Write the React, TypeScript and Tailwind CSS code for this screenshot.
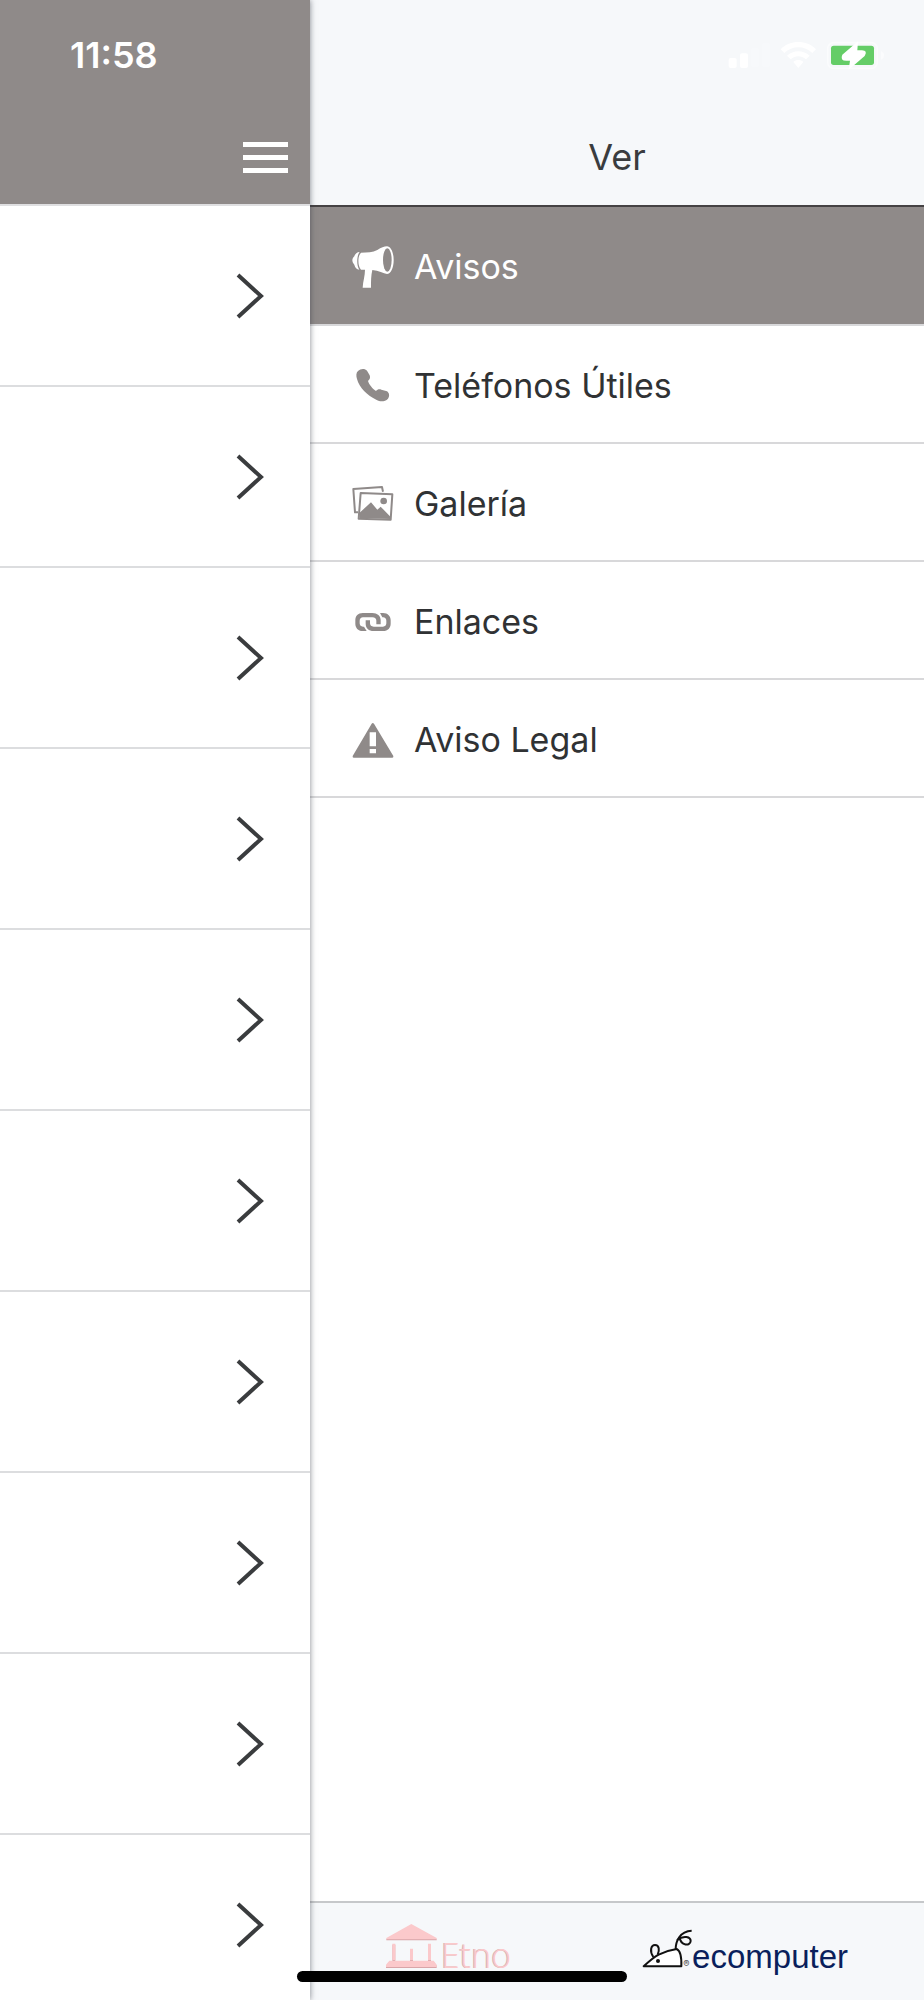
import React from 'react';

const AvisosIcon = () => (
  <svg viewBox="0 0 126 132" className="w-[42px] h-11 shrink-0" fill="currentColor" aria-hidden="true">
    <path d="M27 26C46 26 62 25 76 18C88 11 96 7 105 7C116 7 125 25 125 48C125 72 116 90 105 90C95 88 80 80 61 78C57 95 57 112 57 131H32C33 112 39 95 39 77H27C17 68 16 36 27 26Z" />
    <path d="M23 24C14 34 13 66 22 77C14 77 9 70 7 62C3 58 1 53 1 49C1 44 4 40 7 37C9 30 15 24 23 24Z" />
    <ellipse cx="106" cy="48" rx="13" ry="35" fill="#8f8a89" />
  </svg>
);

const PhoneIcon = () => (
  <svg viewBox="0 0 126 132" className="w-[42px] h-11 shrink-0" fill="currentColor" aria-hidden="true">
    <path d="M18 27C26 19 39 19 45 26L53 40C56 48 53 53 48 57C51 67 61 80 72 87C76 82 82 80 88 83L105 88C113 94 113 103 108 110C99 120 84 120 74 114C45 100 22 77 15 51C12 42 12 32 18 27Z" />
  </svg>
);

const GalleryIcon = () => (
  <svg viewBox="0 0 126 132" className="w-[42px] h-11 shrink-0" fill="none" stroke="currentColor" strokeWidth="6" strokeLinejoin="round" aria-hidden="true">
    <path d="M93 35L90 21L4 27L9 97H18" />
    <path d="M26 39L121 43L116 119L20 116Z" />
    <path d="M22 99L57 67L76 89L86 80L116 111V117L22 114Z" fill="currentColor" stroke="none" />
    <circle cx="95" cy="63" r="10" fill="currentColor" stroke="none" />
  </svg>
);

const LinkIcon = () => (
  <svg viewBox="0 0 126 132" className="w-[42px] h-11 shrink-0" fill="currentColor" aria-hidden="true">
    <path d="M32 45H61C76 45 86 54 86 67V79H73V68C73 62 69 58 61 58H33C27 58 23 62 23 69V76C23 82 27 86 33 86H36L44 99H32C18 99 10 89 10 77V67C10 54 18 45 32 45Z" />
    <path d="M84 45H93C108 45 116 55 116 67V77C116 89 108 99 93 99H65C50 99 41 90 41 77V67H54V76C54 82 58 86 65 86H93C99 86 103 82 103 76V68C103 62 99 58 93 58H91Z" />
  </svg>
);

const WarningIcon = () => (
  <svg viewBox="0 0 126 132" className="w-[42px] h-11 shrink-0" fill="currentColor" aria-hidden="true">
    <path
      fillRule="evenodd"
      d="M59 23Q62 19 66 23L124 120Q125 125 121 125H5Q1 125 2 120ZM53 49V91H72V49ZM53 99V112H72V99Z"
    />
  </svg>
);

const menuItems = [
  { label: 'Avisos', Icon: AvisosIcon, active: true },
  { label: 'Teléfonos Útiles', Icon: PhoneIcon, active: false },
  { label: 'Galería', Icon: GalleryIcon, active: false },
  { label: 'Enlaces', Icon: LinkIcon, active: false },
  { label: 'Aviso Legal', Icon: WarningIcon, active: false },
];

const rows = Array.from({ length: 10 }, (_, i) => i + 1);

const StatusIcons = () => (
  <svg viewBox="78 57 492 96" className="w-[164px] h-8" fill="#ffffff" role="img" aria-label="Status">
    <rect x="86" y="114" width="24" height="30" rx="6" />
    <rect x="120" y="100" width="24" height="44" rx="6" />
    <rect x="153" y="84" width="24" height="58" rx="6" opacity="0.2" />
    <rect x="186" y="68" width="24" height="74" rx="6" opacity="0.2" />
    <path d="M242 88C270 59 320 59 348 88L337 99C314 76 276 76 253 99Z" />
    <path d="M261 107C280 89 310 89 329 107L318 118C304 106 286 106 272 118Z" />
    <path d="M280 126C288 118 302 118 310 126L295 144Z" />
    <rect x="383" y="68" width="149" height="77" rx="18" fill="none" stroke="#ffffff" strokeWidth="5" opacity="0.5" />
    <path d="M543 93C556 97 556 115 543 119Z" opacity="0.5" />
    <rect x="393" y="77" width="129" height="58" rx="8" fill="#65cd67" />
    <path d="M474 64L427 104Q419 122 439 122H450L446 149L494 108Q504 92 486 91H472Z" />
  </svg>
);

const Chevron = () => (
  <svg viewBox="0 0 28 46" className="w-7 h-[46px]" fill="none" stroke="#3a3c3e" strokeWidth="4" aria-hidden="true">
    <path d="M2 2L25 23L2 44" />
  </svg>
);

const PageBehind = () => (
  <main className="relative z-10 w-[310px] shrink-0 h-screen overflow-hidden bg-white shadow-[0_0_6px_rgba(50,55,65,0.6)]">
    <header className="h-[206px] bg-[#8f8a89] border-b-2 border-[#dfdfe1]">
      <div className="h-[110px] pl-[70px] flex items-center">
        <time className="text-[36px] leading-10 font-semibold text-white">11:58</time>
      </div>
      <div className="h-[94px] pr-[22px] flex items-center justify-end">
        <button type="button" aria-label="Menú" className="w-[45px] flex flex-col gap-2">
          <span className="h-[5px] w-full bg-white"></span>
          <span className="h-[5px] w-full bg-white"></span>
          <span className="h-[5px] w-full bg-white"></span>
        </button>
      </div>
    </header>
    <ul>
      {rows.map((row) => (
        <li key={row} className="border-b-2 border-[#dcdddf]">
          <button type="button" aria-label={`Aviso ${row}`} className="w-full h-[179px] pr-[46px] flex items-center justify-end">
            <Chevron />
          </button>
        </li>
      ))}
    </ul>
  </main>
);

const EtnoLogo = () => (
  <a href="#etno" className="flex items-baseline gap-1 text-[#fbc9cb]">
    <svg viewBox="0 0 153 132" className="w-[51px] h-11 drop-shadow-[0_1px_0_#d9a5a8]" fill="currentColor" aria-hidden="true">
      <path d="M76 0L152 42V46H1V42Z" />
      <path d="M19 59H28V108H19ZM72 74H81V108H72ZM126 59H135V108H126Z" />
      <path d="M10 110H143L152 122V129H0V122Z" />
    </svg>
    <span className="font-['Open_Sans',sans-serif] font-light text-[34px] leading-10 [text-shadow:-1px_0_0_#d9b0b2]">Etno</span>
  </a>
);

const EcomputerLogo = () => (
  <a href="#ecomputer" className="flex items-baseline text-[#0a1f5c]">
    <svg viewBox="0 0 150 117" className="w-[50px] h-[39px]" fill="none" stroke="#111111" strokeWidth="6" aria-hidden="true">
      <path d="M5 112C18 100 33 86 50 77C70 67 90 62 104 60C117 66 119 86 118 112Z" fill="#ffffff" strokeLinejoin="round" />
      <path d="M34 84C22 66 27 48 39 48C52 48 53 64 47 77" />
      <path d="M101 61C101 38 113 6 149 5" />
      <path d="M105 33C126 17 146 24 146 36C145 52 117 52 112 24" />
      <circle cx="48" cy="96" r="6" fill="#111111" stroke="none" />
      <text x="124" y="114" fontSize="28" fill="#555555" stroke="none">®</text>
    </svg>
    <span className="font-['Liberation_Sans',Arial,sans-serif] text-[33px] leading-10">ecomputer</span>
  </a>
);

const SideMenu = () => (
  <aside className="flex-1 min-w-0 flex flex-col bg-white">
    <header className="h-[207px] bg-[#f6f8fa] border-b-2 border-[#454243]">
      <div className="h-[110px] pr-[34px] flex items-center justify-end">
        <StatusIcons />
      </div>
      <div className="h-[94px] flex items-center justify-center">
        <h1 className="text-[36px] leading-10 text-[#3a3c3e]">Ver</h1>
      </div>
    </header>

    <nav className="flex-1">
      <ul>
        {menuItems.map(({ label, Icon, active }) => (
          <li key={label} className="border-b-2 border-[#d8d8da]">
            <a
              href="#menu"
              className={
                active
                  ? 'h-[117px] pl-[42px] flex items-center gap-5 bg-[#8f8a89] text-white'
                  : 'h-[116px] pl-[42px] flex items-center gap-5 text-[#8f8a89]'
              }
            >
              <Icon />
              <span className={active ? 'pt-[3px] text-[34px] leading-10 text-white' : 'pt-[3px] text-[34px] leading-10 text-[#303234]'}>
                {label}
              </span>
            </a>
          </li>
        ))}
      </ul>
    </nav>

    <footer className="h-[99px] px-[76px] pt-[21px] flex items-baseline justify-between bg-[#f6f8fa] border-t-2 border-[#c6c8ca]">
      <EtnoLogo />
      <EcomputerLogo />
    </footer>
  </aside>
);

const App = () => {
  return (
    <div className="relative flex h-screen overflow-hidden bg-white font-[Inter,sans-serif]">
      <PageBehind />
      <SideMenu />
      {/* Home indicator */}
      <div className="absolute z-20 bottom-[18px] left-1/2 -translate-x-1/2 w-[330px] h-[11px] rounded-full bg-black"></div>
    </div>
  );
};

export default App;
